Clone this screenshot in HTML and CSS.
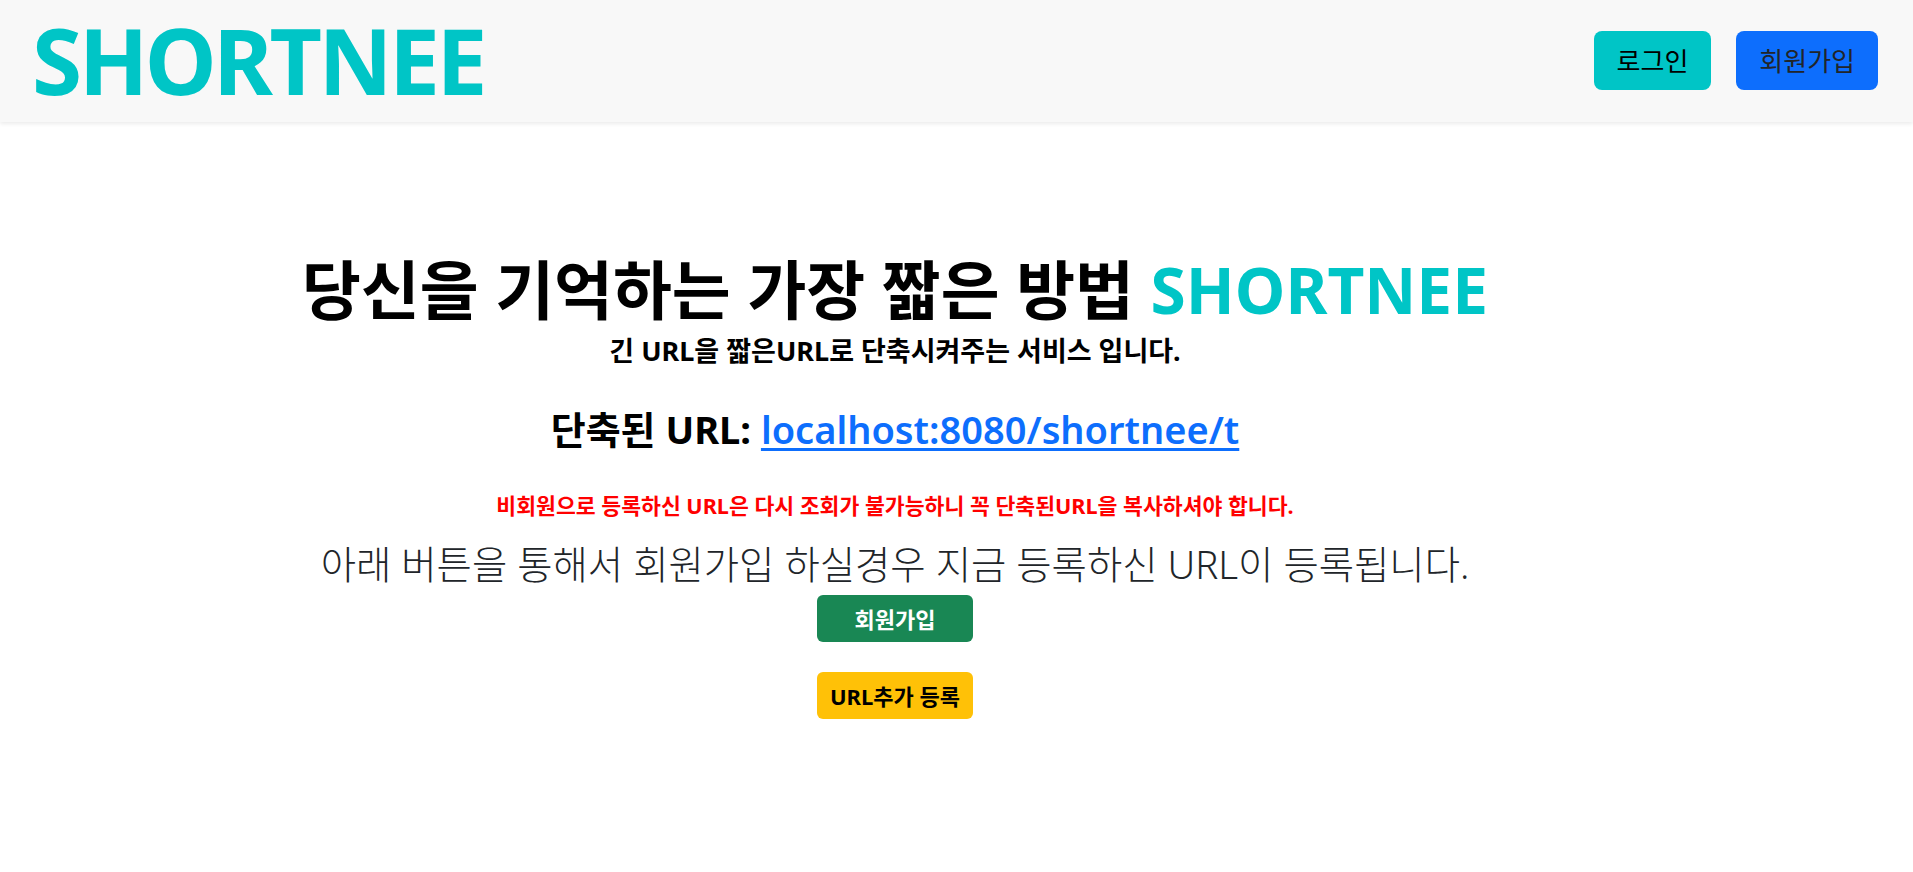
FILE: index.html
```html
<!DOCTYPE html>
<html lang="ko">
<head>
<meta charset="utf-8">
<title>SHORTNEE</title>
<link rel="stylesheet" href="styles.css">
</head>
<body>
<header class="topbar">
  <div class="logo">SHORTNEE</div>
  <nav class="nav">
    <button class="btn btn-login">로그인</button>
    <button class="btn btn-join">회원가입</button>
  </nav>
</header>
<main class="main">
  <h1 class="title">당신을 기억하는 가장 짧은 방법 <span class="brand">SHORTNEE</span></h1>
  <p class="subtitle">긴 URL을 짧은URL로 단축시켜주는 서비스 입니다.</p>
  <h2 class="result">단축된 URL: <a class="short-link" href="#">localhost:8080/shortnee/t</a></h2>
  <p class="warning">비회원으로 등록하신 URL은 다시 조회가 불가능하니 꼭 단축된URL을 복사하셔야 합니다.</p>
  <p class="notice">아래 버튼을 통해서 회원가입 하실경우 지금 등록하신 URL이 등록됩니다.</p>
  <div class="actions">
    <button class="act act-join">회원가입</button>
    <button class="act act-add">URL추가 등록</button>
  </div>
</main>
</body>
</html>
```
FILE: styles.css
```css
* { box-sizing: border-box; }
html, body { margin: 0; padding: 0; }
body {
  font-family: "Noto Sans", "Noto Sans CJK KR", sans-serif;
  color: #000;
  background: #fff;
}
.topbar {
  height: 122px;
  background: #f8f8f8;
  box-shadow: 0 2px 4px rgba(0,0,0,0.08);
  display: flex;
  align-items: center;
  justify-content: space-between;
  padding: 0 35px 0 32px;
}
.logo {
  font-size: 91px;
  font-weight: 700;
  color: #00c5c6;
  line-height: 1;
  letter-spacing: -3.5px;
  margin-top: -2px;
}
.nav { display: flex; gap: 25px; margin-top: -2px; }
.btn {
  font-family: inherit;
  font-size: 26px;
  border: none;
  border-radius: 8px;
  height: 59px;
  padding: 0 23px;
  color: #000;
  cursor: pointer;
}
.btn-login { background: #00c5c6; }
.btn-join { background: #0d6efd; color: #212529; }
.main {
  width: 1790px;
  text-align: center;
  padding-top: 130px;
}
.title {
  font-size: 64px;
  font-weight: 700;
  line-height: 1.2;
  margin: 0;
}
.brand { color: #00c5c6; }
.subtitle {
  font-size: 27px;
  font-weight: 700;
  line-height: 1.2;
  margin: 6px 0 0;
}
.result {
  font-size: 38px;
  font-weight: 700;
  line-height: 1.2;
  margin: 40px 0 0;
}
.short-link { color: #0d6efd; font-weight: 600; text-decoration: underline; text-underline-offset: 4px; }
.warning {
  color: #ff0000;
  font-size: 21.6px;
  font-weight: 700;
  margin: 36px 0 0;
}
.notice {
  font-size: 38.4px;
  font-weight: 300;
  line-height: 1.2;
  color: #212529;
  margin: 21px 0 0;
}
.actions {
  display: flex;
  flex-direction: column;
  align-items: center;
  gap: 30px;
  margin-top: 8px;
}
.act {
  font-family: inherit;
  width: 156px;
  height: 47px;
  border: none;
  border-radius: 6px;
  font-size: 22px;
  font-weight: 700;
  cursor: pointer;
}
.act-join { background: #198754; color: #fff; }
.act-add { background: #ffc107; color: #000; }
```
